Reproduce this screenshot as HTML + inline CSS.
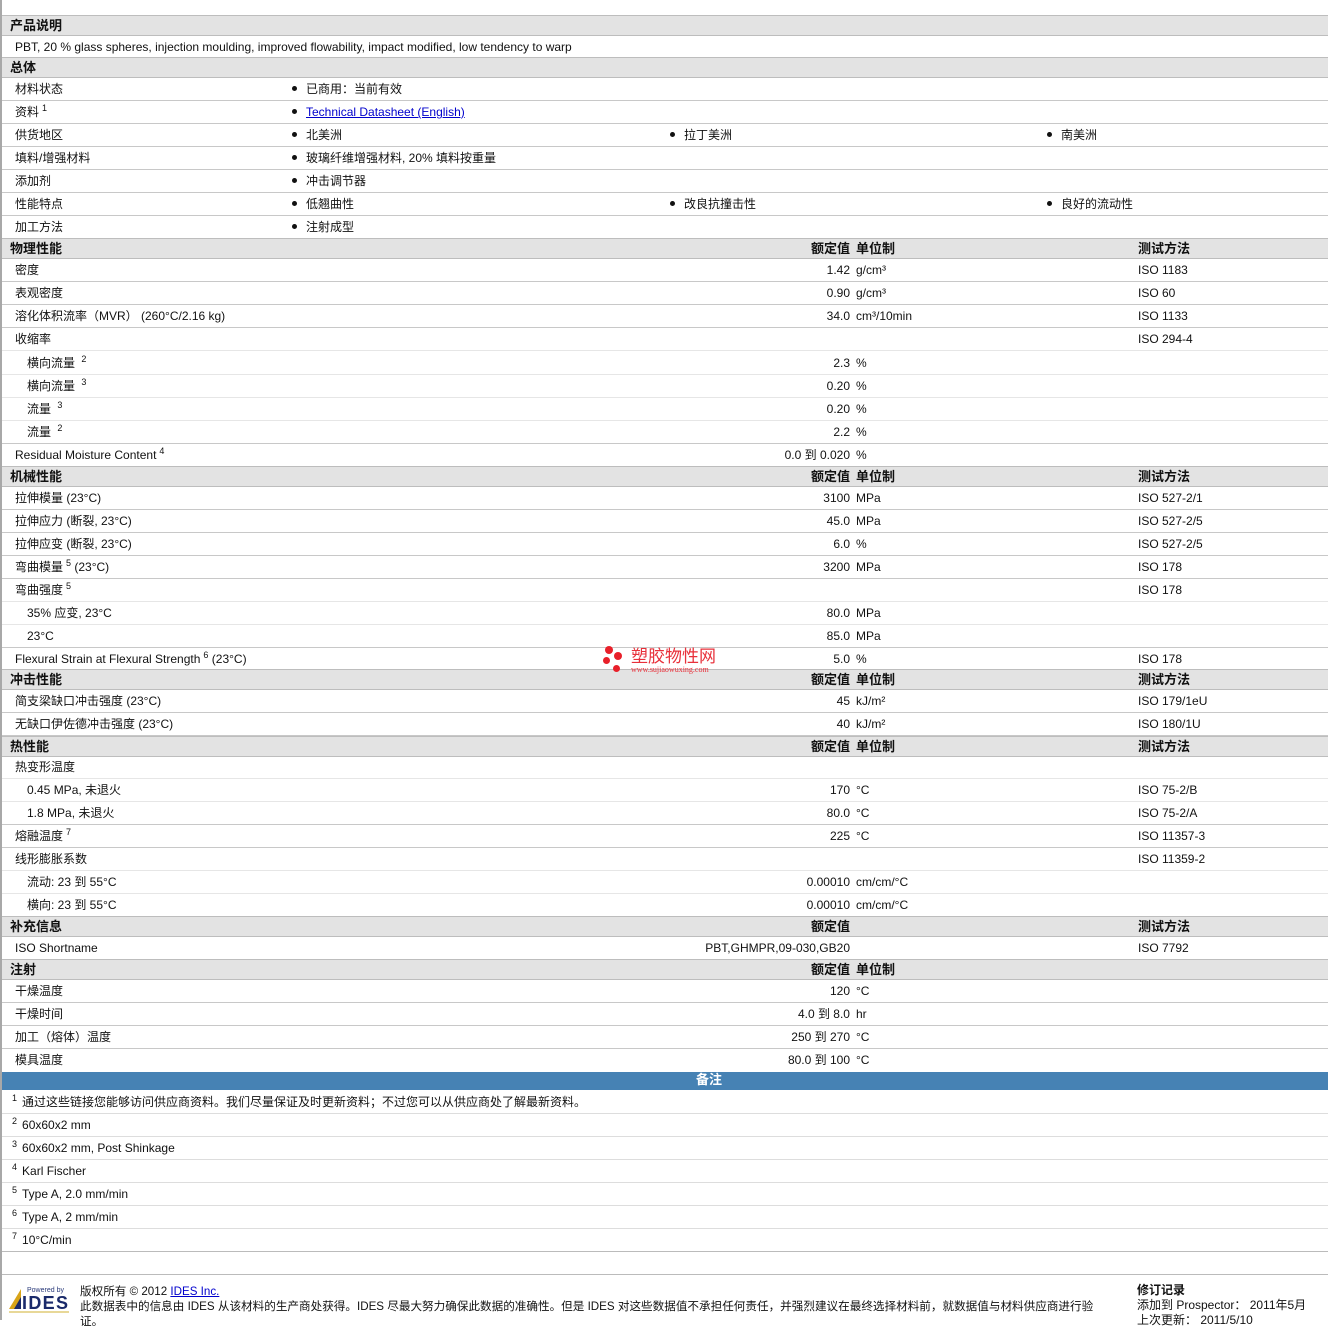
<!DOCTYPE html>
<html><head><meta charset="utf-8"><style>
*{margin:0;padding:0;box-sizing:border-box}
body{width:1328px;height:1320px;overflow:hidden;background:#fff;position:relative;font-family:"Liberation Sans","Noto Sans CJK SC",sans-serif;font-size:12px;color:#111}
.lb{position:absolute;left:0;top:0;width:2px;height:1320px;background:#a8a8a8}
.r{position:absolute;left:2px;width:1326px;height:23px;border-bottom:1px solid #c8c8c8;line-height:23px;white-space:nowrap}
.r.s{border-bottom-color:#e6e6e6}
.h{position:absolute;left:2px;width:1326px;height:21px;background:#e3e3e3;border-top:1px solid #bdbdbd;border-bottom:1px solid #bdbdbd;line-height:19px;font-weight:bold;font-size:13px;white-space:nowrap}
.r span,.h span{position:absolute;top:0}
.l{left:13px}.l2{left:25px}
.v{right:478px;text-align:right}
.u{left:854px}
.t{left:1136px}
.b1{left:290px}.b2{left:668px}.b3{left:1045px}
.b1:before,.b2:before,.b3:before{content:"";display:inline-block;width:5px;height:5px;border-radius:50%;background:#111;position:relative;top:-2px;margin-right:9px}
sup{font-size:9px;line-height:0;position:relative;top:-5px;vertical-align:baseline;margin-left:3px}
a{color:#00c;text-decoration:underline}
</style></head><body>
<div class="lb"></div>
<div class="h" style="top:15px"><span class="l" style="left:8px">产品说明</span></div>
<div class="r" style="top:36px"><span class="l">PBT, 20 % glass spheres, injection moulding, improved flowability, impact modified, low tendency to warp</span></div>
<div class="h" style="top:57px"><span class="l" style="left:8px">总体</span></div>
<div class="r" style="top:78px"><span class="l">材料状态</span><span class="b1">已商用：当前有效</span></div>
<div class="r" style="top:101px"><span class="l">资料<sup>1</sup></span><span class="b1"><a>Technical Datasheet (English)</a></span></div>
<div class="r" style="top:124px"><span class="l">供货地区</span><span class="b1">北美洲</span><span class="b2">拉丁美洲</span><span class="b3">南美洲</span></div>
<div class="r" style="top:147px"><span class="l">填料/增强材料</span><span class="b1">玻璃纤维增强材料, 20% 填料按重量</span></div>
<div class="r" style="top:170px"><span class="l">添加剂</span><span class="b1">冲击调节器</span></div>
<div class="r" style="top:193px"><span class="l">性能特点</span><span class="b1">低翘曲性</span><span class="b2">改良抗撞击性</span><span class="b3">良好的流动性</span></div>
<div class="r" style="top:216px"><span class="l">加工方法</span><span class="b1">注射成型</span></div>
<div class="h" style="top:238px"><span class="l" style="left:8px">物理性能</span><span class="v">额定值</span><span class="u">单位制</span><span class="t">测试方法</span></div>
<div class="r" style="top:259px"><span class="l">密度</span><span class="v">1.42</span><span class="u">g/cm³</span><span class="t">ISO 1183</span></div>
<div class="r" style="top:282px"><span class="l">表观密度</span><span class="v">0.90</span><span class="u">g/cm³</span><span class="t">ISO 60</span></div>
<div class="r" style="top:305px"><span class="l">溶化体积流率（MVR） (260°C/2.16 kg)</span><span class="v">34.0</span><span class="u">cm³/10min</span><span class="t">ISO 1133</span></div>
<div class="r s" style="top:328px"><span class="l">收缩率</span><span class="t">ISO 294-4</span></div>
<div class="r s" style="top:352px"><span class="l2">横向流量 <sup>2</sup></span><span class="v">2.3</span><span class="u">%</span></div>
<div class="r s" style="top:375px"><span class="l2">横向流量 <sup>3</sup></span><span class="v">0.20</span><span class="u">%</span></div>
<div class="r s" style="top:398px"><span class="l2">流量 <sup>3</sup></span><span class="v">0.20</span><span class="u">%</span></div>
<div class="r" style="top:421px"><span class="l2">流量 <sup>2</sup></span><span class="v">2.2</span><span class="u">%</span></div>
<div class="r" style="top:444px"><span class="l">Residual Moisture Content<sup>4</sup></span><span class="v">0.0 到 0.020</span><span class="u">%</span></div>
<div class="h" style="top:466px"><span class="l" style="left:8px">机械性能</span><span class="v">额定值</span><span class="u">单位制</span><span class="t">测试方法</span></div>
<div class="r" style="top:487px"><span class="l">拉伸模量 (23°C)</span><span class="v">3100</span><span class="u">MPa</span><span class="t">ISO 527-2/1</span></div>
<div class="r" style="top:510px"><span class="l">拉伸应力 (断裂, 23°C)</span><span class="v">45.0</span><span class="u">MPa</span><span class="t">ISO 527-2/5</span></div>
<div class="r" style="top:533px"><span class="l">拉伸应变 (断裂, 23°C)</span><span class="v">6.0</span><span class="u">%</span><span class="t">ISO 527-2/5</span></div>
<div class="r" style="top:556px"><span class="l">弯曲模量<sup>5</sup> (23°C)</span><span class="v">3200</span><span class="u">MPa</span><span class="t">ISO 178</span></div>
<div class="r s" style="top:579px"><span class="l">弯曲强度<sup>5</sup></span><span class="t">ISO 178</span></div>
<div class="r s" style="top:602px"><span class="l2">35% 应变, 23°C</span><span class="v">80.0</span><span class="u">MPa</span></div>
<div class="r" style="top:625px"><span class="l2">23°C</span><span class="v">85.0</span><span class="u">MPa</span></div>
<div class="r" style="top:648px"><span class="l">Flexural Strain at Flexural Strength<sup>6</sup> (23°C)</span><span class="v">5.0</span><span class="u">%</span><span class="t">ISO 178</span></div>
<div class="h" style="top:669px"><span class="l" style="left:8px">冲击性能</span><span class="v">额定值</span><span class="u">单位制</span><span class="t">测试方法</span></div>
<div class="r" style="top:690px"><span class="l">简支梁缺口冲击强度 (23°C)</span><span class="v">45</span><span class="u">kJ/m²</span><span class="t">ISO 179/1eU</span></div>
<div class="r" style="top:713px"><span class="l">无缺口伊佐德冲击强度 (23°C)</span><span class="v">40</span><span class="u">kJ/m²</span><span class="t">ISO 180/1U</span></div>
<div class="h" style="top:736px"><span class="l" style="left:8px">热性能</span><span class="v">额定值</span><span class="u">单位制</span><span class="t">测试方法</span></div>
<div class="r s" style="top:756px"><span class="l">热变形温度</span></div>
<div class="r s" style="top:779px"><span class="l2">0.45 MPa, 未退火</span><span class="v">170</span><span class="u">°C</span><span class="t">ISO 75-2/B</span></div>
<div class="r" style="top:802px"><span class="l2">1.8 MPa, 未退火</span><span class="v">80.0</span><span class="u">°C</span><span class="t">ISO 75-2/A</span></div>
<div class="r" style="top:825px"><span class="l">熔融温度<sup>7</sup></span><span class="v">225</span><span class="u">°C</span><span class="t">ISO 11357-3</span></div>
<div class="r s" style="top:848px"><span class="l">线形膨胀系数</span><span class="t">ISO 11359-2</span></div>
<div class="r s" style="top:871px"><span class="l2">流动: 23 到 55°C</span><span class="v">0.00010</span><span class="u">cm/cm/°C</span></div>
<div class="r" style="top:894px"><span class="l2">横向: 23 到 55°C</span><span class="v">0.00010</span><span class="u">cm/cm/°C</span></div>
<div class="h" style="top:916px"><span class="l" style="left:8px">补充信息</span><span class="v">额定值</span><span class="t">测试方法</span></div>
<div class="r" style="top:937px"><span class="l">ISO Shortname</span><span class="v">PBT,GHMPR,09-030,GB20</span><span class="t">ISO 7792</span></div>
<div class="h" style="top:959px"><span class="l" style="left:8px">注射</span><span class="v">额定值</span><span class="u">单位制</span></div>
<div class="r" style="top:980px"><span class="l">干燥温度</span><span class="v">120</span><span class="u">°C</span></div>
<div class="r" style="top:1003px"><span class="l">干燥时间</span><span class="v">4.0 到 8.0</span><span class="u">hr</span></div>
<div class="r" style="top:1026px"><span class="l">加工（熔体）温度</span><span class="v">250 到 270</span><span class="u">°C</span></div>
<div class="r" style="top:1049px;border:0"><span class="l">模具温度</span><span class="v">80.0 到 100</span><span class="u">°C</span></div>
<div style="position:absolute;left:696px;top:1072px;width:632px;height:18px;background:#4682b4"></div>
<div style="position:absolute;left:2px;top:1072px;width:1326px;height:18px;background:#4682b4"></div>
<div style="position:absolute;left:696px;top:1072px;color:#fff;font-weight:bold;font-size:13px;line-height:16px">备注</div>
<div class="r" style="top:1091px;border-bottom-color:#ddd"><span class="l" style="left:10px"><sup style="margin:0 5px 0 0">1</sup>通过这些链接您能够访问供应商资料。我们尽量保证及时更新资料；不过您可以从供应商处了解最新资料。</span></div>
<div class="r" style="top:1114px;border-bottom-color:#ddd"><span class="l" style="left:10px"><sup style="margin:0 5px 0 0">2</sup>60x60x2 mm</span></div>
<div class="r" style="top:1137px;border-bottom-color:#ddd"><span class="l" style="left:10px"><sup style="margin:0 5px 0 0">3</sup>60x60x2 mm, Post Shinkage</span></div>
<div class="r" style="top:1160px;border-bottom-color:#ddd"><span class="l" style="left:10px"><sup style="margin:0 5px 0 0">4</sup>Karl Fischer</span></div>
<div class="r" style="top:1183px;border-bottom-color:#ddd"><span class="l" style="left:10px"><sup style="margin:0 5px 0 0">5</sup>Type A, 2.0 mm/min</span></div>
<div class="r" style="top:1206px;border-bottom-color:#ddd"><span class="l" style="left:10px"><sup style="margin:0 5px 0 0">6</sup>Type A, 2 mm/min</span></div>
<div class="r" style="top:1229px;border-bottom-color:#bbb"><span class="l" style="left:10px"><sup style="margin:0 5px 0 0">7</sup>10°C/min</span></div>
<div style="position:absolute;left:2px;top:1274px;width:1326px;border-top:1px solid #bbb"></div>
<!-- watermark -->
<div style="position:absolute;left:600px;top:643px;width:130px;height:36px">
<div style="position:absolute;left:5px;top:3px;width:8px;height:8px;border-radius:50%;background:#e8202a"></div>
<div style="position:absolute;left:14px;top:9px;width:8px;height:8px;border-radius:50%;background:#e8202a"></div>
<div style="position:absolute;left:3px;top:14px;width:7px;height:7px;border-radius:50%;background:#e8202a"></div>
<div style="position:absolute;left:13px;top:22px;width:7px;height:7px;border-radius:50%;background:#e8202a"></div>
<div style="position:absolute;left:31px;top:2px;font-size:17px;color:#e8303a;line-height:20px;font-family:'Noto Sans CJK SC',sans-serif">塑胶物性网</div>
<div style="position:absolute;left:31px;top:22px;font-size:8px;color:#e8303a;font-family:'Liberation Serif',serif">www.sujiaowuxing.com</div>
</div>
<!-- footer -->
<svg style="position:absolute;left:7px;top:1285px" width="64" height="30" viewBox="0 0 64 30">
<text x="20" y="7" font-size="7" fill="#2a3a7a" font-family="Liberation Sans">Powered by</text>
<polygon points="2,24 14,4 14,24" fill="#d8a418"/>
<polygon points="7,24 14,12 14,24" fill="#1a2a6a"/>
<text x="15" y="24" font-size="18" font-weight="bold" fill="#1a2a6a" font-family="Liberation Sans" textLength="46">IDES</text>
<rect x="2" y="26" width="60" height="2" fill="#e8d898"/>
</svg>
<div style="position:absolute;left:80px;top:1284px;line-height:15px;white-space:nowrap;font-size:11.6px">版权所有 © 2012 <a>IDES Inc.</a><br>此数据表中的信息由 IDES 从该材料的生产商处获得。IDES 尽最大努力确保此数据的准确性。但是 IDES 对这些数据值不承担任何责任，并强烈建议在最终选择材料前，就数据值与材料供应商进行验<br>证。</div>
<div style="position:absolute;left:1137px;top:1283px;line-height:15px;white-space:nowrap"><b>修订记录</b><br>添加到 Prospector： 2011年5月<br>上次更新： 2011/5/10</div>
</body></html>
